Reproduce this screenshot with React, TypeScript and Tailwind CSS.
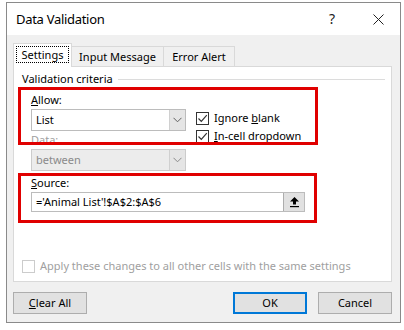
const font = { fontFamily: '"Noto Sans", "Open Sans", sans-serif' };

function Check({ checked = true, disabled = false }: { checked?: boolean; disabled?: boolean }) {
  return (
    <span
      className={`inline-flex shrink-0 w-[13px] h-[13px] items-center justify-center border bg-white ${
        disabled ? "border-[#cccccc]" : "border-[#333333]"
      }`}
    >
      {checked && (
        <svg width="11" height="11" viewBox="0 0 11 11">
          <path d="M1.5 5.5 L4.3 8.3 L9.8 2.2" fill="none" stroke="#333" strokeWidth="1.2" />
        </svg>
      )}
    </span>
  );
}

function Chevron({ color = "#606060" }: { color?: string }) {
  return (
    <svg width="9" height="6" viewBox="0 0 9 6">
      <path d="M0.5 0.8 L4.5 4.8 L8.5 0.8" fill="none" stroke={color} strokeWidth="1" />
    </svg>
  );
}

function Combo({ value, disabled = false }: { value: string; disabled?: boolean }) {
  return (
    <div
      className={`flex shrink-0 w-[155px] h-[22px] border ${
        disabled ? "border-[#cccccc] bg-[#ececec]" : "border-[#bcbcbc] bg-white"
      }`}
    >
      <div className={`flex-1 flex items-center pl-[4px] ${disabled ? "text-[#8a8a8a]" : "text-black"}`}>
        {value}
      </div>
      <div className="w-[16px] bg-[#e5e5e5] border-l border-[#d0d0d0] flex items-center justify-center">
        <Chevron color={disabled ? "#8a8a8a" : "#606060"} />
      </div>
    </div>
  );
}

function Button({ children, primary = false }: { children: React.ReactNode; primary?: boolean }) {
  return (
    <div
      className={`w-[74px] h-[22px] flex items-center justify-center bg-[#e1e1e1] text-black ${
        primary ? "border-2 border-[#0078d7]" : "border border-[#adadad]"
      }`}
    >
      {children}
    </div>
  );
}

export default function App() {
  return (
    <div className="relative w-[404px] h-[330px] bg-white pt-[2px] pl-[6px] text-[11px] leading-[16px]" style={font}>
      <div className="w-[395px] h-[321px] border border-[#8a8a8a] flex flex-col">
        {/* title bar */}
        <div className="h-[32px] shrink-0 bg-white flex items-center pl-[9px] pr-[16px]">
          <span className="text-[13px] tracking-[-0.3px] text-black flex-1">Data Validation</span>
          <span className="text-[14px] text-[#222] mr-[38px]">?</span>
          <svg width="11" height="11" viewBox="0 0 11 11">
            <path d="M0.5 0.5 L10.5 10.5 M10.5 0.5 L0.5 10.5" stroke="#222" strokeWidth="1" />
          </svg>
        </div>

        {/* body */}
        <div className="flex-1 bg-[#f0f0f0] pl-[6px] pr-[8px] pt-[8px] flex flex-col">
          {/* tabs */}
          <div className="flex items-end h-[23px] pl-[2px] text-black">
            <div className="relative z-10 h-[24px] -mb-px -ml-[2px] w-[59px] px-[2px] pt-[2px] bg-white border border-b-0 border-[#d9d9d9]">
              <div className="border border-dotted border-black h-[17px] flex items-center justify-center">Settings</div>
            </div>
            <div className="h-[20px] w-[92px] border border-l-0 border-b-0 border-[#d9d9d9] flex items-center justify-center">
              Input Message
            </div>
            <div className="h-[20px] w-[71px] border border-l-0 border-b-0 border-[#d9d9d9] flex items-center justify-center">
              Error Alert
            </div>
          </div>

          {/* panel */}
          <div className="h-[216px] shrink-0 bg-white border border-[#d9d9d9] pl-[8px] pr-[6px] pt-[4px] text-black">
            <div className="flex items-center">
              <span>Validation criteria</span>
              <div className="flex-1 h-px bg-[#dcdcdc] ml-[5px] mt-[1px]" />
            </div>

            <div className="pl-[9px]">
              <div className="mt-[5px]">
                <u>A</u>llow:
              </div>
              <div className="flex items-start h-[22px] mt-[1px]">
                <Combo value="List" />
                <div className="ml-[10px] mt-[2px] flex flex-col gap-[4px] leading-[14px]">
                  <div className="flex items-center gap-[5px]">
                    <Check />
                    <span>
                      Ignore <u>b</u>lank
                    </span>
                  </div>
                  <div className="flex items-center gap-[5px]">
                    <Check />
                    <span>
                      <u>I</u>n-cell dropdown
                    </span>
                  </div>
                </div>
              </div>

              <div className="mt-[1px] text-[#a0a0a0]">Data:</div>
              <div className="mt-[1px]">
                <Combo value="between" disabled />
              </div>

              <div className="mt-[4px]">
                <u>S</u>ource:
              </div>
              <div className="mt-[1px] flex w-[274px] h-[20px] border border-[#bcbcbc] bg-white">
                <div className="flex-1 flex items-center pl-[4px]">='Animal List'!$A$2:$A$6</div>
                <div className="w-[21px] bg-[#e1e1e1] border-l border-[#adadad] flex items-center justify-center">
                  <svg width="11" height="12" viewBox="0 0 11 12">
                    <path d="M5.5 1 L10 5.5 L7 5.5 L7 8.5 L4 8.5 L4 5.5 L1 5.5 Z" fill="#000" />
                    <rect x="1" y="10" width="9" height="1.2" fill="#000" />
                  </svg>
                </div>
              </div>
            </div>

            <div className="mt-[47px] flex items-center gap-[5px] text-[#a0a0a0] leading-[14px]">
              <Check checked={false} disabled />
              <span className="whitespace-nowrap">Apply these changes to all other cells with the same settings</span>
            </div>
          </div>

          {/* buttons */}
          <div className="flex mt-[10px]">
            <Button>
              <span>
                <u>C</u>lear All
              </span>
            </Button>
            <div className="flex-1" />
            <Button primary>OK</Button>
            <div className="w-[11px]" />
            <Button>Cancel</Button>
          </div>
        </div>
      </div>

      {/* highlight boxes drawn over the dialog */}
      <div className="absolute left-[18px] top-[87px] w-[300px] h-[58px] border-[3px] border-[#e00000]" />
      <div className="absolute left-[18px] top-[173px] w-[299px] h-[50px] border-[3px] border-[#e00000]" />
    </div>
  );
}
